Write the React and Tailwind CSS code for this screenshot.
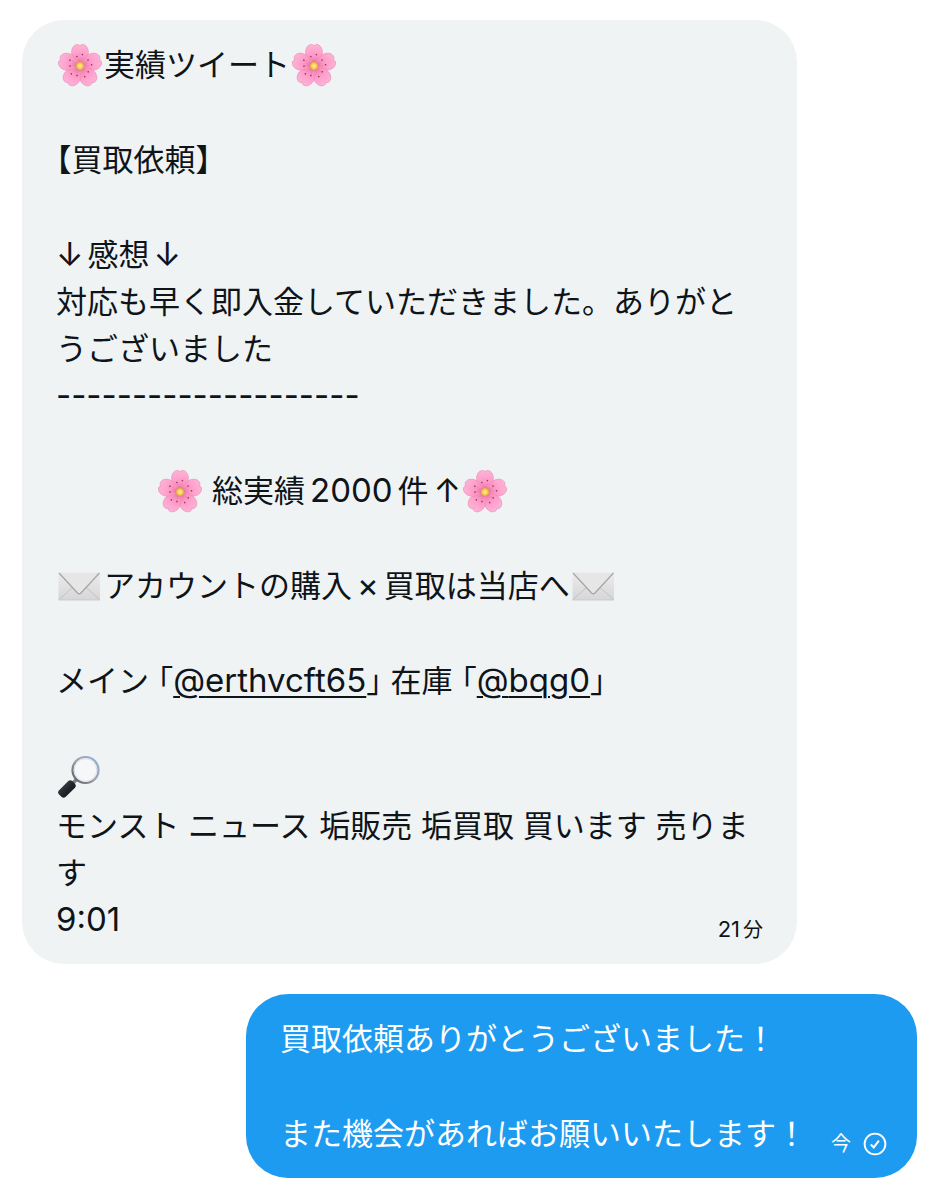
import { clsx } from "clsx";

const Blossom = () => (
  <svg viewBox="0 0 48 48" className="size-12 shrink-0" role="img" aria-label="Cherry blossom">
    <defs>
      <radialGradient id="petal" gradientUnits="userSpaceOnUse" cx="24" cy="25" r="22">
        <stop offset="0" stopColor="#e0568f" />
        <stop offset="0.3" stopColor="#f88fbd" />
        <stop offset="0.7" stopColor="#ffa5cf" />
        <stop offset="1" stopColor="#fbb4d6" />
      </radialGradient>
      <radialGradient id="pollen">
        <stop offset="0" stopColor="#fff09a" />
        <stop offset="0.6" stopColor="#f5cb55" />
        <stop offset="1" stopColor="#dd9448" />
      </radialGradient>
    </defs>
    {[0, 72, 144, 216, 288].map((angle) => (
      <g key={angle} transform={`rotate(${angle} 24 25)`}>
        <path
          d="M24 25C20 21.500 15.800 16.500 15.600 11.500C15.500 7 18 3.600 21.300 3.400C22.600 3.400 23.500 3.900 24 4.900C24.500 3.900 25.400 3.400 26.700 3.400C30 3.600 32.500 7 32.400 11.500C32.200 16.500 28 21.500 24 25Z"
          fill="url(#petal)"
          stroke="#ee86b5"
          strokeWidth="0.6"
        />
        <path d="M24 24V17M24 24L21.500 16M24 24L26.500 16" stroke="#e570a3" strokeWidth="0.4" />
        <circle cx="20.800" cy="15.500" r="0.8" fill="#9c2f5c" />
        <circle cx="26.400" cy="13.600" r="0.8" fill="#9c2f5c" />
      </g>
    ))}
    <circle cx="24" cy="25" r="4.400" fill="url(#pollen)" />
  </svg>
);

const Envelope = () => (
  <svg viewBox="0 0 48 48" className="size-12 shrink-0" role="img" aria-label="Envelope">
    <defs>
      <linearGradient id="paper" x1="0" y1="0" x2="0" y2="1">
        <stop offset="0" stopColor="#ececec" />
        <stop offset="1" stopColor="#d6d6d6" />
      </linearGradient>
    </defs>
    <rect x="2.500" y="10.500" width="41.500" height="27.500" fill="url(#paper)" />
    <path d="M3 37.500L17 25M43.500 37.500L29.500 25" stroke="#bdbdbd" strokeWidth="0.8" />
    <path d="M3 11L21.500 31Q23.300 32.800 25 31L43.500 11Z" fill="#e6e6e6" />
    <path d="M3 11L21.500 31Q23.300 32.800 25 31L43.500 11" fill="none" stroke="#a5a5a5" strokeWidth="1.200" />
    <path d="M2.500 38H44" stroke="#c6c6c6" strokeWidth="0.8" />
  </svg>
);

const Magnifier = () => (
  <svg viewBox="0 0 48 48" className="size-12 shrink-0" role="img" aria-label="Magnifying glass">
    <defs>
      <linearGradient id="rim" x1="0" y1="1" x2="1" y2="0">
        <stop offset="0" stopColor="#55585f" />
        <stop offset="0.5" stopColor="#9da1aa" />
        <stop offset="1" stopColor="#8fb3e0" />
      </linearGradient>
      <linearGradient id="grip" x1="0" y1="0" x2="1" y2="1">
        <stop offset="0" stopColor="#50545b" />
        <stop offset="0.5" stopColor="#24272c" />
        <stop offset="1" stopColor="#0d0f12" />
      </linearGradient>
    </defs>
    <path d="M16 31L20.500 26.500" stroke="#7a7e86" strokeWidth="3.500" />
    <path
      d="M2.800 37.500L12.300 28Q14.200 26.400 16.300 28L19.200 30.900Q20.700 32.800 19 34.800L9.500 44Q7.400 45.600 5.400 43.800L2.600 41Q1.200 39.300 2.800 37.500Z"
      fill="url(#grip)"
    />
    <circle cx="29.500" cy="17" r="13" fill="#f6f7f9" stroke="url(#rim)" strokeWidth="2.200" />
    <circle cx="29.500" cy="17" r="11.300" fill="none" stroke="#d5d8de" strokeWidth="0.8" />
  </svg>
);

const SentCheck = () => (
  <svg viewBox="0 0 24 24" className="size-6" fill="none" stroke="currentColor" role="img" aria-label="Sent">
    <circle cx="12" cy="12" r="10.400" strokeWidth="1.900" />
    <path d="M7.800 12.600L10.700 15.400L15.900 8.700" strokeWidth="2.100" />
  </svg>
);

const Bubble = ({ own, children }) => (
  <article
    className={clsx(
      "flex rounded-[42px] py-[21px] text-[31px] leading-[47px]",
      own
        ? "items-end gap-6 self-end bg-[#1d9bf0] pr-[30px] pl-[34px] text-white"
        : "w-full max-w-[775px] self-start bg-[#eff3f4] px-[34px] text-[#0f1419]"
    )}
  >
    {children}
  </article>
);

// Latin glyphs are set a little larger than the kana around them
const Latin = ({ children }) => <span className="text-[33px]">{children}</span>;

const Mention = ({ name }) => (
  <a href={`#${name}`} className="text-[33px] underline decoration-2 underline-offset-4">
    @{name}
  </a>
);

export default function App() {
  return (
    <main
      lang="ja"
      className="flex min-h-screen flex-col gap-[30px] bg-white px-[22px] py-5 font-['Inter','Noto_Sans_CJK_JP',sans-serif]"
    >
      <Bubble>
        <div className="flex w-full flex-col gap-12">
          <p className="flex h-[47px] items-center">
            <Blossom />
            実績ツイート
            <Blossom />
          </p>
          <p className="[font-feature-settings:'halt']">【買取依頼】</p>
          <div>
            <p className="flex h-[47px] items-baseline gap-1">
              <Latin>↓</Latin>
              感想
              <Latin>↓</Latin>
            </p>
            <p>対応も早く即入金していただきました。ありがとうございました</p>
            <p className="h-[47px] text-[33px]">--------------------</p>
          </div>
          <p className="flex h-[47px] items-center pl-[100px]">
            <Blossom />
            <span className="flex items-baseline gap-[5px] pl-2">
              総実績
              <Latin>2000</Latin>
              件
              <Latin>↑</Latin>
            </span>
            <Blossom />
          </p>
          <p className="flex h-[47px] items-center">
            <Envelope />
            <span className="flex items-baseline gap-[5px]">
              アカウントの購入
              <Latin>×</Latin>
              買取は当店へ
            </span>
            <Envelope />
          </p>
          <p className="[font-feature-settings:'halt']">
            メイン 「<Mention name="erthvcft65" />」 在庫 「<Mention name="bqg0" />」
          </p>
          <div>
            <p className="flex h-[50px] items-center">
              <Magnifier />
            </p>
            <p>モンスト ニュース 垢販売 垢買取 買います 売ります</p>
            <div className="flex items-end justify-between">
              <p className="text-[33px]">9:01</p>
              <time className="flex items-baseline gap-[3px] text-xl leading-[26px]">
                <span className="text-[22px]">21</span>分
              </time>
            </div>
          </div>
        </div>
      </Bubble>

      <Bubble own>
        <div className="flex flex-col gap-12">
          <p>買取依頼ありがとうございました！</p>
          <p>また機会があればお願いいたします！</p>
        </div>
        <div className="flex items-center gap-3">
          <time className="text-xl leading-[26px]">今</time>
          <SentCheck />
        </div>
      </Bubble>
    </main>
  );
}
